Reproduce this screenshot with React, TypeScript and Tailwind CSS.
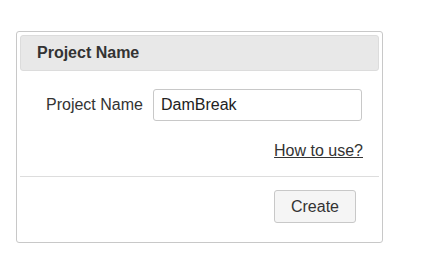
export default function App() {
  return (
    <div className="min-h-screen bg-white pt-[31px] pl-4" style={{ fontFamily: '"Liberation Sans", Arial, sans-serif' }}>
      <div className="w-[367px] h-[212px] border border-[#c8c8c8] rounded-[3px] p-[3px] flex flex-col">
        {/* Header */}
        <div className="h-[36px] bg-[#e8e8e8] border border-[#dcdcdc] rounded-[3px] flex items-center pl-4">
          <span className="text-[16px] font-bold text-[#333]">Project Name</span>
        </div>

        {/* Body */}
        <div className="flex items-center mt-[18px] pl-[26px]">
          <label className="text-[16px] text-[#333] w-[107px]">Project Name</label>
          <input
            className="w-[209px] h-[32px] border border-[#c8c8c8] rounded-[3px] px-[7px] text-[16px] text-[#222] outline-none"
            defaultValue="DamBreak"
          />
        </div>
        <div className="flex justify-end pr-[16px] mt-[20px]">
          <a href="#" className="text-[16px] text-[#333] underline leading-[20px]">
            How to use?
          </a>
        </div>

        <div className="border-t border-[#dddddd] mt-[15px]" />

        <div className="flex justify-end pr-[23px] mt-[13px]">
          <button className="w-[82px] h-[33px] bg-[#f5f5f5] border border-[#c8c8c8] rounded-[3px] text-[16px] text-[#333]">
            Create
          </button>
        </div>
      </div>
    </div>
  );
}
